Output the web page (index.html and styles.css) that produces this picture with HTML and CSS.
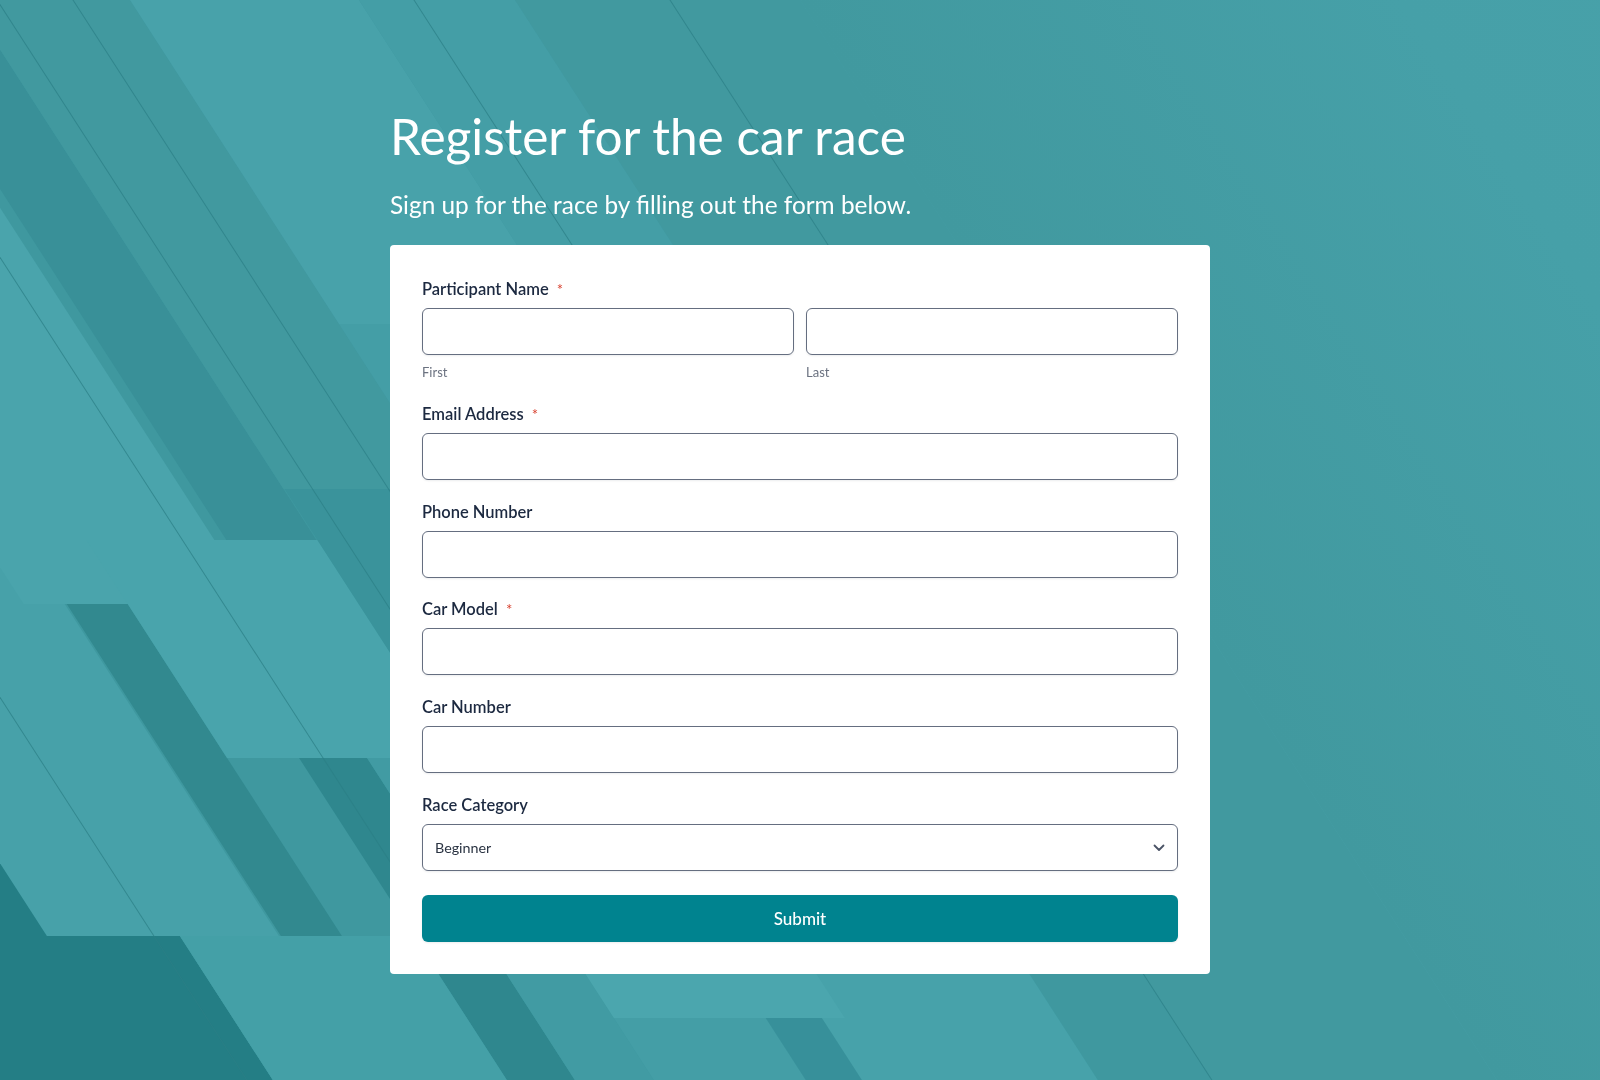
FILE: index.html
```html
<!DOCTYPE html>
<html lang="en">
<head>
<meta charset="utf-8">
<title>Register for the car race</title>
<link rel="stylesheet" href="styles.css">
</head>
<body>
<div class="bg" aria-hidden="true">
  <svg width="1600" height="1080" viewBox="0 0 1600 1080" preserveAspectRatio="none">
    <defs>
      <linearGradient id="base" x1="0" y1="0" x2="1" y2="0">
        <stop offset="0" stop-color="#3e969e"/>
        <stop offset="0.4" stop-color="#439ca4"/>
        <stop offset="0.7" stop-color="#46a0a8"/>
        <stop offset="1" stop-color="#49a2aa"/>
      </linearGradient>
      <linearGradient id="right" x1="0" y1="0" x2="1" y2="0">
        <stop offset="0" stop-color="#41999f"/>
        <stop offset="0.5" stop-color="#46a0a8"/>
        <stop offset="1" stop-color="#49a2aa"/>
      </linearGradient>
    </defs>
    <rect x="0" y="0" width="1600" height="1080" fill="url(#base)"/>
    <g transform="skewX(32.83)">
      <rect x="-1200" y="0" width="776" height="1080" fill="#247e85"/>
      <rect x="-424" y="0" width="393" height="1080" fill="#3f989f"/>
      <rect x="-557" y="0" width="232" height="936" fill="#47a1a9"/>
      <rect x="-366" y="0" width="232" height="604" fill="#4aa4ac"/>
      <rect x="-323" y="604" width="61" height="332" fill="#32898f"/>
      <rect x="-122" y="0" width="90" height="540" fill="#399098"/>
      <rect x="-262" y="540" width="231" height="218" fill="#49a4ac"/>
      <rect x="-32" y="0" width="162" height="489" fill="#41999f"/>
      <rect x="130" y="0" width="229" height="324" fill="#48a2aa"/>
      <rect x="130" y="324" width="229" height="376" fill="#449ea6"/>
      <rect x="-31" y="489" width="140" height="591" fill="#3a939b"/>
      <rect x="-190" y="758" width="68" height="322" fill="#2f878e"/>
      <rect x="-424" y="936" width="234" height="144" fill="#44a0a7"/>
      <rect x="-122" y="758" width="79" height="322" fill="#419ba3"/>
      <rect x="165" y="700" width="236" height="380" fill="#47a2aa"/>
      <rect x="-43" y="1018" width="152" height="62" fill="#449ea6"/>
      <rect x="109" y="1018" width="56" height="62" fill="#37909a"/>
      <rect x="-43" y="700" width="231" height="318" fill="#4ba6ae"/>
      <rect x="401" y="700" width="114" height="380" fill="#3f989f"/>
      <rect x="359" y="0" width="156" height="700" fill="#449ea6"/>
      <rect x="515" y="0" width="285" height="1080" fill="#41999f"/>
      <rect x="800" y="0" width="1200" height="1080" fill="url(#right)"/>
      <g stroke="#2b7f86" stroke-width="1.1" stroke-opacity="0.75">
        <line x1="-3" y1="0" x2="-3" y2="880"/>
        <line x1="73" y1="0" x2="73" y2="880"/>
        <line x1="-166" y1="0" x2="-166" y2="880"/>
        <line x1="-450" y1="0" x2="-450" y2="1080"/>
        <line x1="414" y1="0" x2="414" y2="300"/>
        <line x1="670" y1="0" x2="670" y2="300"/>
        <line x1="515" y1="900" x2="515" y2="1080"/>
      </g>
    </g>
  </svg>
</div>

<main class="page">
  <h1 class="title">Register for the car race</h1>
  <p class="subtitle">Sign up for the race by filling out the form below.</p>

  <form class="card">
    <div class="field field-name">
      <label class="label">Participant Name <span class="req">*</span></label>
      <div class="name-row">
        <div class="name-col">
          <input class="input" type="text">
          <span class="sublabel">First</span>
        </div>
        <div class="name-col">
          <input class="input" type="text">
          <span class="sublabel">Last</span>
        </div>
      </div>
    </div>

    <div class="field">
      <label class="label">Email Address <span class="req">*</span></label>
      <input class="input" type="email">
    </div>

    <div class="field">
      <label class="label">Phone Number</label>
      <input class="input" type="tel">
    </div>

    <div class="field">
      <label class="label">Car Model <span class="req">*</span></label>
      <input class="input" type="text">
    </div>

    <div class="field">
      <label class="label">Car Number</label>
      <input class="input" type="text">
    </div>

    <div class="field field-last">
      <label class="label">Race Category</label>
      <div class="select-wrap">
        <select class="input select">
          <option>Beginner</option>
          <option>Intermediate</option>
          <option>Advanced</option>
        </select>
        <svg class="chevron" width="12" height="8" viewBox="0 0 12 8">
          <polyline points="1.5,1.5 6,6 10.5,1.5" fill="none" stroke="#4a5365" stroke-width="1.8" stroke-linecap="round" stroke-linejoin="round"/>
        </svg>
      </div>
    </div>

    <button class="submit" type="button">Submit</button>
  </form>
</main>
</body>
</html>
```

FILE: styles.css
```css
html, body {
  margin: 0;
  padding: 0;
}

body {
  font-family: "Lato", "Open Sans", "Liberation Sans", sans-serif;
  min-height: 1080px;
  overflow: hidden;
  background: #449ea6;
}

.bg {
  position: fixed;
  inset: 0;
  z-index: 0;
}

.bg svg {
  display: block;
}

.page {
  position: relative;
  z-index: 1;
  width: 820px;
  margin: 0 auto;
  padding-top: 107px;
}

.title {
  margin: 0;
  font-size: 49.5px;
  line-height: 58px;
  font-weight: 400;
  color: #ffffff;
}

.subtitle {
  margin: 25px 0 0;
  font-size: 24.4px;
  line-height: 30px;
  font-weight: 400;
  color: #ffffff;
}

.card {
  margin-top: 25px;
  background: #ffffff;
  border-radius: 4px;
  padding: 33px 32px 32px;
  box-sizing: border-box;
}

.field {
  margin-bottom: 20.8px;
}

.field-name {
  margin-bottom: 21.8px;
}

.field-last {
  margin-bottom: 24.5px;
}

.label {
  display: block;
  font-size: 16.5px;
  line-height: 22px;
  font-weight: 600;
  color: #1c2940;
  margin-bottom: 8px;
}

.req {
  color: #d8412f;
  font-size: 15px;
  margin-left: 4px;
  font-weight: 400;
}

.input {
  display: block;
  width: 100%;
  height: 47px;
  box-sizing: border-box;
  border: 1px solid #656e80;
  border-radius: 6px;
  background: #ffffff;
  box-shadow: 0 1px 2px rgba(16, 24, 40, 0.08);
  margin: 0;
  font-family: inherit;
}

.name-row {
  display: grid;
  grid-template-columns: 1fr 1fr;
  gap: 12px;
}

.sublabel {
  display: block;
  margin-top: 8px;
  font-size: 13px;
  line-height: 18px;
  color: #6b7280;
}

.select-wrap {
  position: relative;
}

.select {
  appearance: none;
  -webkit-appearance: none;
  padding: 0 12px;
  font-size: 14.3px;
  color: #2a3342;
}

.chevron {
  position: absolute;
  right: 13px;
  top: 20px;
  pointer-events: none;
}

.submit {
  display: block;
  width: 100%;
  height: 47px;
  margin: 0;
  border: 0;
  border-radius: 6px;
  background: #00838f;
  color: #ffffff;
  font-family: inherit;
  font-size: 17px;
  font-weight: 500;
  box-shadow: 0 1px 2px rgba(16, 24, 40, 0.08);
}
```
